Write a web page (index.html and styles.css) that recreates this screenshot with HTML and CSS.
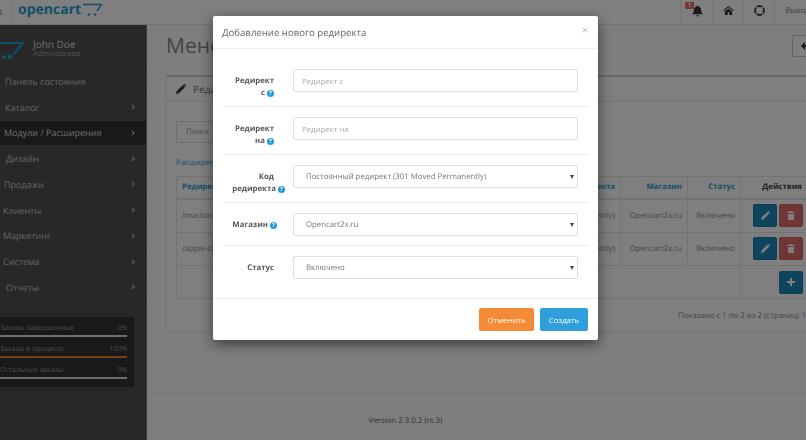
FILE: index.html
```html
<!DOCTYPE html>
<html lang="ru">
<head>
<meta charset="utf-8">
<title>Менеджер редиректов</title>
<link rel="stylesheet" href="styles.css">
</head>
<body>
<div class="page">
  <header class="topbar">
    <div class="burger"><i></i><i></i><i></i></div>
    <div class="logo"><span class="logo-text">opencart</span>
      <svg class="logo-cart" width="19" height="14" viewBox="0 0 19 14"><path d="M0 1.500H18.500L14 8" fill="none" stroke-width="1.500"/><circle cx="6" cy="11.500" r="1.300"/><circle cx="12" cy="11.500" r="1.300"/></svg>
    </div>
    <div class="top-right">
      <div class="top-item bell"><span class="badge">1</span>
        <svg width="11" height="12" viewBox="0 0 12 12"><path d="M6 0a1 1 0 0 1 1 1c2 .4 3 2 3 4 0 2 .5 3 2 4.500H0C1.500 8 2 7 2 5c0-2 1-3.600 3-4a1 1 0 0 1 1-1zM4.500 10.500h3A1.500 1.500 0 0 1 4.500 10.500z" fill="#333"/></svg>
      </div>
      <div class="top-item home">
        <svg width="11" height="9" viewBox="0 0 12 10"><path d="M6 0l6 5-.7.8L6 1.500.7 5.800 0 5zM2 6l4-3.300L10 6v4H7V7H5v3H2z" fill="#333"/></svg>
      </div>
      <div class="top-item help">
        <svg width="11" height="11" viewBox="0 0 12 12"><circle cx="6" cy="6" r="4.800" fill="none" stroke="#444" stroke-width="2.200"/><path d="M1.800 1.800l2.400 2.400M10.200 1.800L7.800 4.200M1.800 10.200l2.400-2.400M10.200 10.200L7.800 7.800" stroke="#fff" stroke-width="1.300"/></svg>
      </div>
      <div class="top-item logout">Выход</div>
    </div>
  </header>
  <div class="body-row">
    <nav class="sidebar">
      <div class="profile">
        <svg class="avatar-cart" width="26" height="22" viewBox="0 0 26 22"><path d="M-4 3H23L14 14" fill="none" stroke-width="2"/><circle cx="4" cy="17" r="2"/><circle cx="10" cy="17" r="2.400"/></svg>
        <div class="profile-text"><div class="name">John Doe</div><div class="role">Administrator</div></div>
      </div>
      <ul class="menu">
        <li class="item i-dash"><span>Панель состояния</span></li>
        <li class="item i-cat"><span>Каталог</span><b class="chev"></b></li>
        <li class="item i-mod active"><span>Модули / Расширения</span><b class="chev"></b></li>
        <li class="item i-des"><span>Дизайн</span><b class="chev"></b></li>
        <li class="item i-sal"><span>Продажи</span><b class="chev"></b></li>
        <li class="item i-cli"><span>Клиенты</span><b class="chev"></b></li>
        <li class="item i-mar"><span>Маркетинг</span><b class="chev"></b></li>
        <li class="item i-sys"><span>Система</span><b class="chev"></b></li>
        <li class="item i-rep"><span>Отчеты</span><b class="chev"></b></li>
      </ul>
      <div class="stats">
        <div class="stat"><div class="stat-row"><span>Заказы завершенные</span><span>0%</span></div><div class="stat-bar"></div></div>
        <div class="stat"><div class="stat-row"><span>Заказы в процессе</span><span>100%</span></div><div class="stat-bar orange"></div></div>
        <div class="stat"><div class="stat-row"><span>Остальные заказы</span><span>0%</span></div><div class="stat-bar"></div></div>
      </div>
    </nav>
    <main class="content">
      <div class="page-head">
        <h1>Менеджер редиректов</h1>
        <div class="back-btn"><svg width="10" height="8" viewBox="0 0 10 8"><path d="M4 0L0 4l4 4V5h6V3H4z" fill="#333"/></svg></div>
      </div>
      <section class="panel">
        <div class="panel-head">
          <svg width="10" height="10" viewBox="0 0 11 11"><path d="M0 11l.7-3L7.500 1.200l2.300 2.300L3 10.300zM8.300.4a1 1 0 0 1 1.400 0l.9.9a1 1 0 0 1 0 1.400l-.3.3L8 .7z" fill="#333"/></svg>
          <span>Редактирование редиректа</span>
        </div>
        <div class="panel-body">
          <div class="search">Поиск</div>
          <div class="crumb">Расширения</div>
          <table class="grid">
            <thead>
              <tr><th class="c1">Редирект с</th><th class="c2">Код редиректа</th><th class="c3">Магазин</th><th class="c4">Статус</th><th class="c5">Действия</th></tr>
            </thead>
            <tbody>
              <tr><td>/macbook</td><td class="r">(301 Moved Permanently)</td><td class="r">Opencart2x.ru</td><td class="r">Включено</td><td class="acts"><span class="sq blue"><svg width="9" height="9" viewBox="0 0 11 11"><path d="M0 11l.7-3L7.500 1.200l2.300 2.300L3 10.300zM8.300.4a1 1 0 0 1 1.400 0l.9.9a1 1 0 0 1 0 1.400l-.3.3L8 .7z"/></svg></span><span class="sq red"><svg width="8" height="9" viewBox="0 0 8 9"><path d="M0 1h2.500V0h3v1H8v1H0zM1 3h6v6H1z"/></svg></span></td></tr>
              <tr><td>/apple-cinema</td><td class="r">(301 Moved Permanently)</td><td class="r">Opencart2x.ru</td><td class="r">Включено</td><td class="acts"><span class="sq blue"><svg width="9" height="9" viewBox="0 0 11 11"><path d="M0 11l.7-3L7.500 1.200l2.300 2.300L3 10.300zM8.300.4a1 1 0 0 1 1.400 0l.9.9a1 1 0 0 1 0 1.400l-.3.3L8 .7z"/></svg></span><span class="sq red"><svg width="8" height="9" viewBox="0 0 8 9"><path d="M0 1h2.500V0h3v1H8v1H0zM1 3h6v6H1z"/></svg></span></td></tr>
              <tr class="add-row"><td colspan="4"></td><td class="acts"><span class="sq blue"><svg width="8" height="8" viewBox="0 0 8 8"><path d="M3 0h2v3h3v2H5v3H3V5H0V3h3z"/></svg></span></td></tr>
            </tbody>
          </table>
          <div class="pager">Показано с 1 по 2 из 2 (страниц: 1)</div>
        </div>
      </section>
      <footer class="foot">Version 2.3.0.2 (rs.3)</footer>
    </main>
  </div>
</div>

<div class="backdrop"></div>
<div class="modal">
  <div class="modal-head"><span class="modal-title">Добавление нового редиректа</span><span class="close">×</span></div>
  <div class="modal-body">
    <div class="field"><label class="lbl">Редирект<br>с <i class="q">?</i></label><div class="ctl"><input class="inp" type="text" placeholder="Редирект с"></div></div>
    <div class="field"><label class="lbl">Редирект<br>на <i class="q">?</i></label><div class="ctl"><input class="inp" type="text" placeholder="Редирект на"></div></div>
    <div class="field"><label class="lbl">Код<br><span class="over-long">редиректа <i class="q">?</i></span></label><div class="ctl"><div class="sel">Постоянный редирект (301 Moved Permanently)</div></div></div>
    <div class="field short"><label class="lbl"><span class="over-short">Магазин <i class="q">?</i></span></label><div class="ctl"><div class="sel">Opencart2x.ru</div></div></div>
    <div class="field short last"><label class="lbl">Статус</label><div class="ctl"><div class="sel">Включено</div></div></div>
  </div>
  <div class="modal-foot"><button class="btn orange-btn">Отменить</button><button class="btn blue-btn">Создать</button></div>
</div>
</body>
</html>
```
FILE: styles.css
```css
* { box-sizing: border-box; }
html, body { margin: 0; padding: 0; height: 100%; overflow: hidden; }
body { font-family: "Open Sans", "Liberation Sans", sans-serif; font-size: 8px; color: #666; background: #fff; text-rendering: geometricPrecision; }
.page { width: 806px; height: 440px; display: flex; flex-direction: column; overflow: hidden; }

.topbar { height: 25px; flex: none; display: flex; align-items: center; background: #fff; border-bottom: 1px solid #e5e5e5; }
.burger { width: 12px; flex: none; height: 24px; border-right: 1px solid #eee; display: flex; flex-direction: column; justify-content: center; gap: 1px; }
.burger i { display: block; width: 2px; height: 1px; background: #888; }
.logo { display: flex; align-items: flex-start; gap: 2px; padding: 0 0 0 6px; height: 24px; }
.logo-text { font-weight: 700; font-size: 14px; line-height: 19px; color: #23a1d1; }
.logo-cart { margin-top: 3px; }
.logo-cart path { stroke: #23a1d1; }
.logo-cart circle { fill: #23a1d1; }
.top-right { margin-left: auto; display: flex; height: 24px; }
.top-item { width: 31px; border-left: 1px solid #eee; display: flex; align-items: center; justify-content: center; position: relative; padding-bottom: 3px; }
.bell { width: 32px; }
.bell svg { margin-left: 2px; }
.badge { position: absolute; left: 4px; top: 2px; width: 9px; height: 7px; border-radius: 1px; background: #f56b6b; color: #fff; font-size: 6px; line-height: 7px; font-weight: 700; text-align: center; }
.logout { width: 32px; justify-content: flex-start; padding-left: 10px; font-size: 8px; color: #777; overflow: hidden; white-space: nowrap; }

.body-row { flex: 1; display: flex; min-height: 0; }
.sidebar { width: 147px; flex: none; background: #515151; border-right: 1px solid #777; display: flex; flex-direction: column; color: #ccc; }
.profile { height: 44px; flex: none; display: flex; align-items: flex-start; border-bottom: 1px solid #595959; }
.avatar-cart { margin-top: 15px; flex: none; }
.avatar-cart path { stroke: #1e9fd0; }
.avatar-cart circle { fill: #1e9fd0; }
.profile-text { margin-left: 7px; margin-top: 13px; }
.name { font-size: 10px; line-height: 12px; color: #ddd; }
.role { font-size: 7.500px; line-height: 9px; color: #aaa; }
.menu { list-style: none; margin: 0; padding: 0; }
.item { height: 25.750px; display: flex; align-items: center; font-size: 9px; color: #c8c8c8; position: relative; border-bottom: 1px solid #595959; }
.item.active { background: #333; color: #ddd; }
.i-dash span { padding-left: 5px; } .i-cat span { padding-left: 5px; } .i-mod span { padding-left: 4px; }
.i-des span { padding-left: 6px; } .i-sal span { padding-left: 4px; } .i-cli span { padding-left: 3px; }
.i-mar span { padding-left: 3px; } .i-sys span { padding-left: 3px; } .i-rep span { padding-left: 6px; }
.chev { position: absolute; left: 130px; top: 50%; width: 4px; height: 4px; margin-top: -2px; border-top: 1px solid #bbb; border-right: 1px solid #bbb; transform: rotate(45deg); }
.stats { margin-top: 16px; width: 134px; height: 70px; background: #333; border-radius: 0 2px 2px 0; padding: 7px 7px 0 0; }
.stat { height: 21px; }
.stat-row { display: flex; justify-content: space-between; font-size: 7px; line-height: 10px; color: #999; }
.stat-bar { height: 2px; margin-top: 1px; background: #ddd; }
.stat-bar.orange { background: #e8812b; }

.content { flex: 1; min-width: 0; background: #fcfcfc; display: flex; flex-direction: column; position: relative; overflow: hidden; }
.page-head { height: 36px; flex: none; position: relative; display: flex; align-items: center; padding: 6px 0 0 19px; }
h1 { margin: 0; font-size: 21px; font-weight: 400; color: #888; line-height: 30px; white-space: nowrap; }
.back-btn { position: absolute; left: 645px; top: 10px; width: 30px; height: 22px; border: 1px solid #ccc; border-radius: 2px; background: #fff; display: flex; align-items: center; padding-left: 8px; }
.panel { margin: 14px 0 0 19px; width: 660px; height: 257px; flex: none; background: #fff; border: 1px solid #e6e6e6; border-top: 0; }
.panel-head { height: 27px; border-bottom: 1px solid #e8e8e8; display: flex; align-items: center; padding-left: 9px; gap: 7px; font-size: 10px; color: #777; border-top: 2px solid #cfcfcf; }
.panel-body { padding: 19px 10px 0 9px; }
.search { width: 200px; height: 22px; border: 1px solid #ddd; border-radius: 2px; font-size: 7.800px; line-height: 20px; padding-left: 9px; color: #999; }
.crumb { margin-top: 14px; font-size: 7.800px; line-height: 13px; color: #23a1d1; }
.grid { margin-top: 6px; width: 631px; border-collapse: collapse; table-layout: fixed; font-size: 7.800px; color: #888; }
.grid th, .grid td { border: 1px solid #e4e4e4; padding: 0 5px; white-space: nowrap; overflow: hidden; }
.grid th { height: 22px; font-weight: 700; color: #23a1d1; text-align: right; border-bottom-width: 2px; }
.grid th.c1 { text-align: left; }
.grid th.c5 { color: #444; }
.c1 { width: 232px; } .c2 { width: 212px; } .c3 { width: 67px; } .c4 { width: 53px; } .c5 { width: 67px; }
.grid td { height: 33.500px; }
.grid td.r { text-align: right; }
.add-row td { height: 33px; }
.acts { text-align: right; font-size: 0; padding: 0 4px 0 0 !important; }
.sq { display: inline-flex; align-items: center; justify-content: center; width: 24px; height: 23px; border-radius: 2px; margin-left: 2px; vertical-align: middle; }
.sq.blue { background: #1d88bb; border: 1px solid #1a7dad; }
.sq.red { background: #e06a6a; border: 1px solid #d86060; }
.sq svg path { fill: #fff; }
.pager { margin-top: 11px; padding-left: 502px; font-size: 7.800px; line-height: 12px; color: #888; white-space: nowrap; }
.foot { margin-top: 61px; padding: 21px 142px 0 0; text-align: center; font-size: 7.800px; line-height: 12px; color: #666; border-top: 1px solid #e6e6e6; flex: none; }

.backdrop { position: fixed; inset: 0; background: rgba(0,0,0,.5); }
.modal { position: fixed; left: 213px; top: 16px; width: 385px; height: 324px; background: #fff; border-radius: 2px; box-shadow: 0 4px 14px rgba(0,0,0,.55); display: flex; flex-direction: column; }
.modal-head { height: 33px; flex: none; display: flex; align-items: center; justify-content: space-between; padding: 0 10px 0 9px; border-bottom: 1px solid #eee; }
.modal-title { font-size: 9.600px; color: #666; }
.close { font-size: 11px; color: #bbb; line-height: 1; margin-bottom: 3px; }
.modal-body { padding: 10px 9px; flex: 1; }
.field { display: flex; align-items: flex-start; height: 48px; padding-top: 10px; border-bottom: 1px solid #f1f1f1; }
.field.short { height: 43px; }
.field.last { height: 42px; border-bottom: 0; }
.lbl { width: 52px; flex: none; padding-top: 7px; text-align: right; font-weight: 700; font-size: 7.800px; line-height: 11.500px; color: #555; white-space: nowrap; }
.over-long { display: inline-block; margin-right: -11px; }
.over-short { display: inline-block; margin-right: -3px; }
.q { display: inline-block; width: 7px; height: 7px; border-radius: 50%; background: #1e9bd7; color: #fff; font-style: normal; font-size: 6px; line-height: 7px; text-align: center; font-weight: 700; vertical-align: 0; }
.ctl { margin-left: 19px; width: 285px; }
.inp, .sel { display: block; width: 285px; height: 23px; border: 1px solid #ddd; border-radius: 2px; background: #fff; font-family: inherit; font-size: 7.800px; color: #777; outline: 0; }
.inp { padding: 0 8px; }
.inp::placeholder { color: #aaa; opacity: 1; }
.sel { line-height: 23px; padding-left: 12px; position: relative; }
.sel::after { content: ""; position: absolute; right: 3px; top: 9px; border-left: 2.500px solid transparent; border-right: 2.500px solid transparent; border-top: 4px solid #444; }
.modal-foot { height: 42px; flex: none; border-top: 1px solid #eee; display: flex; justify-content: flex-end; align-items: flex-start; gap: 6px; padding: 9px 10px 0 0; }
.btn { height: 23px; border: 0; border-radius: 2px; color: #fff; font-family: inherit; font-size: 7.800px; padding: 0; }
.orange-btn { width: 55px; background: #f68b37; }
.blue-btn { width: 48px; background: #2f9fdb; }
```
